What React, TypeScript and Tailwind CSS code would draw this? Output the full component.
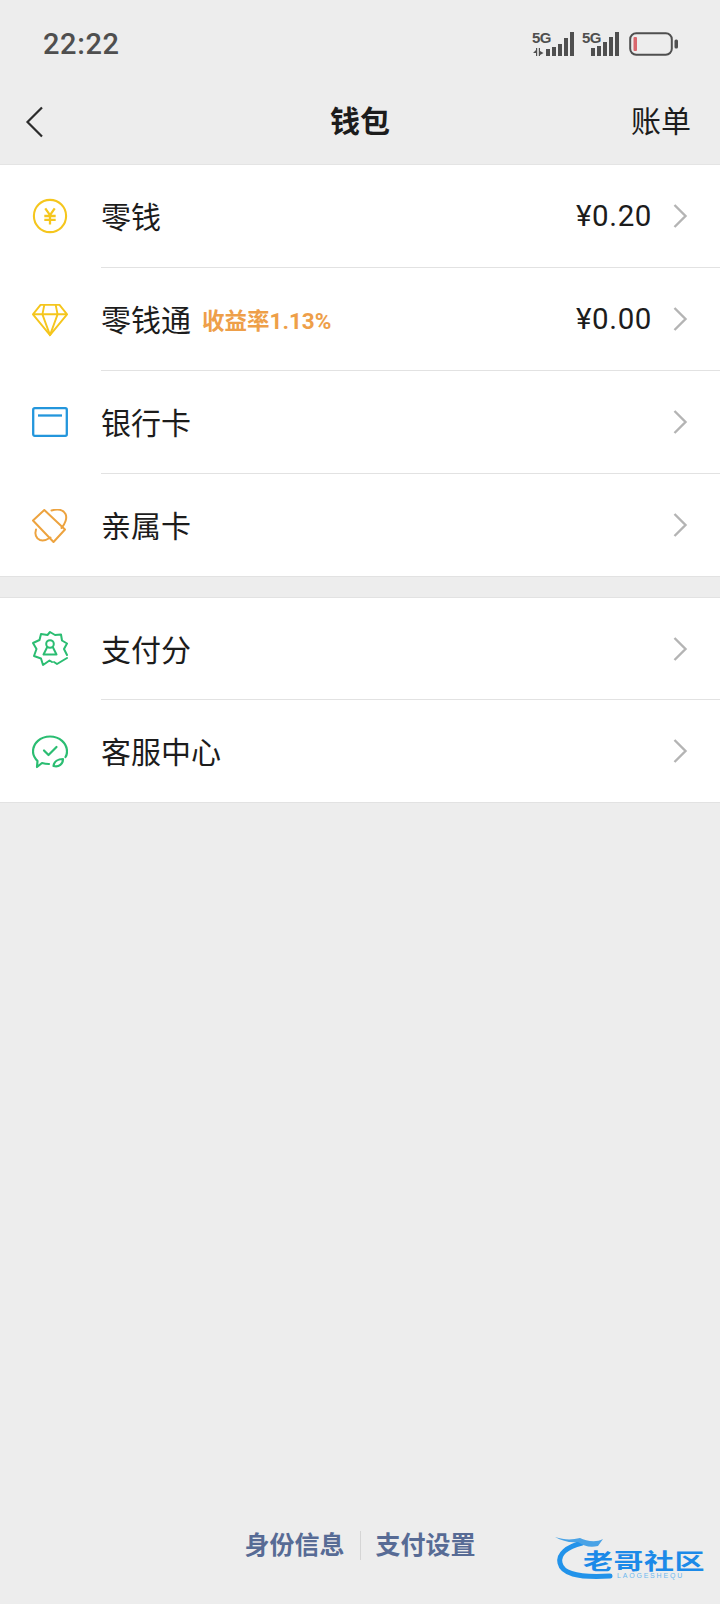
import { ReactNode } from "react";

const cjk = "font-['Roboto','Noto_Sans_CJK_SC',sans-serif]";

function Chevron() {
  return (
    <svg width="16" height="26" viewBox="0 0 16 26" fill="none" className="ml-[20px] shrink-0">
      <path d="M2.5 2 L13.5 13 L2.5 24" stroke="#b4b4b4" strokeWidth="2.4" />
    </svg>
  );
}

function YuanIcon() {
  return (
    <svg width="38" height="38" viewBox="0 0 38 38" fill="none" stroke="#f5c61d">
      <circle cx="19" cy="19" r="17" strokeWidth="2.2" />
      <path d="M14 11 L19 18 L24 11 M13 19 H25 M13 23 H25 M19 18 V28" strokeWidth="2.4" />
    </svg>
  );
}

function DiamondIcon() {
  return (
    <svg width="38" height="36" viewBox="0 0 38 36" fill="none" stroke="#f5c61d" strokeWidth="2" strokeLinejoin="round" className="mt-[2px]">
      <path d="M9 2 H29 L37 12 L19 34 L1 12 Z" />
      <path d="M1 12 H37 M13 2 L11 12 L19 34 L27 12 L25 2" />
    </svg>
  );
}

function CardIcon() {
  return (
    <svg width="36" height="30" viewBox="0 0 36 30" fill="none" stroke="#2396dc" strokeWidth="2.3">
      <rect x="1.2" y="1.2" width="33.6" height="27.6" rx="1.5" />
      <path d="M6 8.5 H30" />
    </svg>
  );
}

function FamilyCardIcon() {
  return (
    <svg width="36" height="36" viewBox="0 0 36 36" fill="none" stroke="#eda33f" strokeWidth="2" strokeLinejoin="round" strokeLinecap="round" className="mt-[5px]">
      <path d="M1 11.5 L12.3 1 L33 20.5 L21.5 33 Z" />
      <path d="M19.5 1.5 C 25 0, 31 0.5, 33.5 5 C 35.5 9, 33 15, 29.5 19" />
      <path d="M4 20.5 C 2.5 25, 4 29.5, 8 31 C 11.5 32.2, 15.5 30.5, 18.5 28.5" />
    </svg>
  );
}

function ScoreIcon() {
  return (
    <svg width="36" height="36" viewBox="0 0 36 36" fill="none" stroke="#2bbd72" strokeWidth="2" strokeLinejoin="round" strokeLinecap="round" className="mt-[2px]">
      <path d="M20 31 L17.5 29.5 L11 34 L9 27.5 L2 25 L4.5 18 L1 12 L7.5 9 L9 3 L15.5 4 L18 1 L23 4 L29 3.5 L30 9.5 L35 12.5 L32 18 L35 24" />
      <circle cx="18" cy="13" r="3.8" />
      <path d="M15 16.5 L11.5 23.5 H24.5 L21 16.5" />
      <path d="M22 31 L25 33 L35 27" />
    </svg>
  );
}

function ServiceIcon() {
  return (
    <svg width="36" height="34" viewBox="0 0 36 34" fill="none" stroke="#2bbd72" strokeWidth="2.2" strokeLinejoin="round" strokeLinecap="round" className="mt-[4px]">
      <path d="M17 29 C 14 29, 12 28.6, 10 28 L 5 32 L 5.5 26 C 2.5 23, 1 20, 1 16.5 C 1 8, 8.5 1.5, 18 1.5 C 27.5 1.5, 35 8, 35 16.5 C 35 18.8, 34.5 20.5, 33.5 22" />
      <path d="M12 15.5 L16.5 20 L24.5 12" />
      <path d="M21.5 31 C 22 26.5, 26 24, 31 24 C 31 29, 27 32.5, 21.5 31 Z" />
    </svg>
  );
}

function Row({ icon, label, tag, value, last, short }: { icon: ReactNode; label: string; tag?: string; value?: string; last?: boolean; short?: boolean }) {
  return (
    <div className={`flex items-stretch ${short ? "h-[102px]" : "h-[103px]"}`}>
      <div className="flex w-[101px] shrink-0 items-center pb-[2px] pl-[32px]">
        <div className="flex w-[36px] items-center justify-center">{icon}</div>
      </div>
      <div className={`flex flex-1 items-center pr-[32px] ${last ? "" : "border-b border-[#e2e2e2]"}`}>
        <span className="mt-[4px] text-[30px] leading-none text-[#1c1c1c]">{label}</span>
        {tag && <span className="mt-[4px] ml-[11px] text-[22.5px] leading-none font-bold text-[#ee9f49]">{tag}</span>}
        <span className="mt-[2px] ml-auto text-[29.5px] leading-none tracking-[0.6px] text-[#1c1c1c]">{value}</span>
        <Chevron />
      </div>
    </div>
  );
}

function Bars({ heights }: { heights: number[] }) {
  return (
    <div className="flex items-end gap-[2px]">
      {heights.map((h, i) => (
        <div key={i} className="w-[4px] bg-[#4f4f4f]" style={{ height: h }} />
      ))}
    </div>
  );
}

function StatusIcons() {
  return (
    <div className="flex items-end text-[#4f4f4f]">
      <div className="relative h-[24px] w-[42px]">
        <span className="absolute top-[-3px] left-0 text-[15px] leading-[18px] font-bold tracking-[-0.5px] font-['Liberation_Sans',sans-serif]">5G</span>
        <span className="absolute right-0 bottom-0">
          <Bars heights={[7, 9, 12, 18, 24]} />
        </span>
        <svg width="11" height="8" viewBox="0 0 11 8" className="absolute bottom-0 left-[1px]" fill="#4f4f4f">
          <path d="M3 0 V8 H4.2 V0 Z M3 2 L0 5 H3 Z M7 0 V8 H5.8 V0 Z M7 3 L10.5 5 L7 7 Z" />
        </svg>
      </div>
      <div className="relative ml-[8px] h-[24px] w-[37px]">
        <span className="absolute top-[-3px] left-0 text-[15px] leading-[18px] font-bold tracking-[-0.5px] font-['Liberation_Sans',sans-serif]">5G</span>
        <span className="absolute right-0 bottom-0">
          <Bars heights={[8, 10, 14, 19, 24]} />
        </span>
      </div>
      <svg width="49" height="24" viewBox="0 0 49 24" fill="none" className="ml-[10px]">
        <rect x="1.2" y="1.2" width="41.6" height="21.6" rx="6" stroke="#4f4f4f" strokeWidth="2" />
        <rect x="4.5" y="5" width="3.5" height="14" rx="1" fill="#d9666c" />
        <rect x="45.5" y="7.5" width="3.5" height="9" rx="1.5" fill="#4f4f4f" />
      </svg>
    </div>
  );
}

function Logo() {
  return (
    <div className="absolute top-[1530px] left-[552px] h-[52px] w-[160px]">
      <svg width="70" height="52" viewBox="0 0 70 52" fill="none" className="absolute top-0 left-0">
        <path d="M30 13 C 15 17, 6 24, 8 33 C 10 43, 24 48, 58 46" stroke="#2293ea" strokeWidth="5" strokeLinecap="round" />
        <path d="M3 7 C 12 10, 20 10, 28 8 C 34 11, 44 13, 51 9 L 46 16 C 38 18, 32 16, 26 12 C 18 13, 10 11, 3 7 Z" fill="#4aa3e6" />
      </svg>
      <span className="absolute top-[20px] left-[31px] scale-y-[0.72] text-[30px] leading-[20px] font-bold tracking-[0.5px] whitespace-nowrap text-[#1c8ae8] font-['Noto_Sans_CJK_SC',sans-serif]">老哥社区</span>
      <span className="absolute top-[42px] left-[65px] text-[7px] leading-none tracking-[1.8px] text-[#6db8ee] font-['Liberation_Sans',sans-serif]">LAOGESHEQU</span>
    </div>
  );
}

export default function App() {
  return (
    <div className={`relative flex h-[1604px] w-[720px] flex-col overflow-hidden bg-[#ededed] ${cjk}`}>
      {/* Status bar */}
      <div className="flex h-[80px] items-center justify-between pt-[8px] pr-[42px] pl-[43px]">
        <span className="text-[29px] leading-none font-medium tracking-[0.6px] text-[#4f4f4f]">22:22</span>
        <StatusIcons />
      </div>

      {/* Nav */}
      <div className="relative flex h-[85px] items-center justify-between border-b border-[#e4e4e4] pr-[29px] pl-[25px]">
        <svg width="20" height="32" viewBox="0 0 20 32" fill="none">
          <path d="M17 1.5 L2.5 16 L17 30.5" stroke="#2c2c2c" strokeWidth="2.2" />
        </svg>
        <span className="absolute left-0 w-full text-center text-[30px] leading-none font-bold text-[#1c1c1c]">钱包</span>
        <span className="text-[30px] leading-none text-[#1c1c1c]">账单</span>
      </div>

      <div className="border-b border-[#e2e2e2] bg-white">
        <Row icon={<YuanIcon />} label="零钱" value="¥0.20" />
        <Row icon={<DiamondIcon />} label="零钱通" tag="收益率1.13%" value="¥0.00" />
        <Row icon={<CardIcon />} label="银行卡" />
        <Row icon={<FamilyCardIcon />} label="亲属卡" last short />
      </div>

      <div className="mt-[20px] border-y border-[#e2e2e2] bg-white">
        <Row icon={<ScoreIcon />} label="支付分" short />
        <Row icon={<ServiceIcon />} label="客服中心" last short />
      </div>

      {/* Footer links */}
      <div className="mt-auto mb-[44px] flex items-center justify-center text-[25px] leading-none font-semibold text-[#576b95]">
        <span className="pr-[15px]">身份信息</span>
        <span className="h-[29px] w-px bg-[#d5d5d5]" />
        <span className="pl-[15px]">支付设置</span>
      </div>

      <Logo />
    </div>
  );
}
